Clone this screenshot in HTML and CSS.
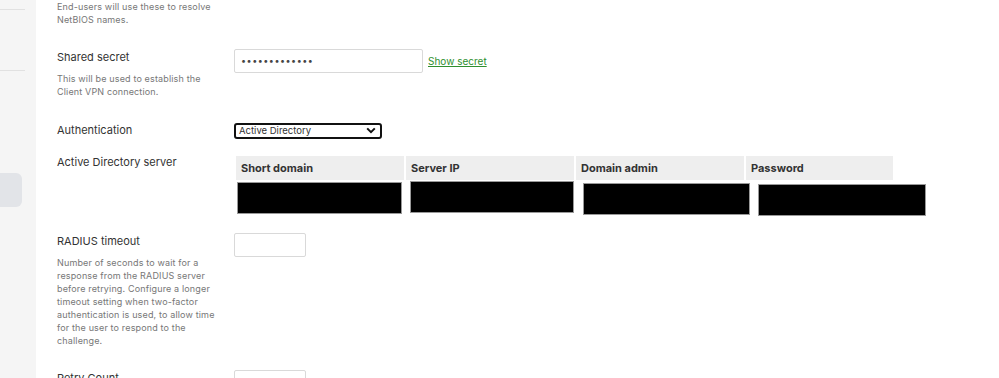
FILE: index.html
```html
<!DOCTYPE html>
<html>
<head>
<meta charset="utf-8">
<link rel="stylesheet" href="styles.css">
</head>
<body>
<div class="page">
  <aside class="sidebar">
    <div class="side-line side-line-top"></div>
    <div class="side-line side-line-mid"></div>
    <div class="side-pill"></div>
  </aside>
  <main class="main">
    <div class="row row-first">
      <div class="label-col">
        <p class="desc">End-users will use these to resolve NetBIOS names.</p>
      </div>
    </div>

    <div class="row">
      <div class="label-col">
        <div class="label">Shared secret</div>
        <p class="desc">This will be used to establish the Client VPN connection.</p>
      </div>
      <div class="control-col control-inline">
        <input class="text-input secret" type="password" value="abcdefghijklm">
        <a class="link" href="#">Show secret</a>
      </div>
    </div>

    <div class="row row-auth">
      <div class="label-col">
        <div class="label">Authentication</div>
      </div>
      <div class="control-col">
        <div class="select">
          <span>Active Directory</span>
          <svg class="chev" width="10" height="7" viewBox="0 0 10 7"><path d="M1.2 1.4 L5 5.2 L8.8 1.4" fill="none" stroke="#111" stroke-width="2"/></svg>
        </div>
      </div>
    </div>

    <div class="row row-ads">
      <div class="label-col">
        <div class="label">Active Directory server</div>
      </div>
      <div class="control-col">
        <div class="ads-head">
          <div class="th th-wide">Short domain</div>
          <div class="th th-wide">Server IP</div>
          <div class="th th-wide">Domain admin</div>
          <div class="th th-narrow">Password</div>
        </div>
        <div class="ads-body">
          <div class="redact r1"></div>
          <div class="redact r2"></div>
          <div class="redact r3"></div>
          <div class="redact r4"></div>
        </div>
      </div>
    </div>

    <div class="row row-radius">
      <div class="label-col">
        <div class="label">RADIUS timeout</div>
        <p class="desc">Number of seconds to wait for a response from the RADIUS server before retrying. Configure a longer timeout setting when two-factor authentication is used, to allow time for the user to respond to the challenge.</p>
      </div>
      <div class="control-col">
        <input class="text-input small" type="text">
      </div>
    </div>

    <div class="row">
      <div class="label-col">
        <div class="label">Retry Count</div>
      </div>
      <div class="control-col">
        <input class="text-input small" type="text">
      </div>
    </div>
  </main>
</div>
</body>
</html>
```
FILE: styles.css
```css
* { box-sizing: border-box; }
html, body { margin: 0; padding: 0; height: 100%; overflow: hidden; background: #fff; }
body { font-family: Inter, "Noto Sans", sans-serif; color: #333; }

.page { display: flex; height: 378px; overflow: hidden; }

.sidebar {
  width: 36px;
  flex: none;
  background: #f5f5f5;
  display: flex;
  flex-direction: column;
}
.side-line { height: 1px; width: 25px; background: #e1e1e1; }
.side-line-top { margin-top: 9px; }
.side-line-mid { margin-top: 60px; }
.side-pill {
  margin-top: 102px;
  width: 22px;
  height: 34px;
  background: #e2e4e8;
  border-radius: 0 6px 6px 0;
}

.main { flex: 1; padding-left: 21px; margin-top: -0.5px; }

.row { display: flex; margin-top: 23.5px; }
.row-first { margin-top: 0; }
.row-auth { margin-top: 23.5px; }
.row-ads { margin-top: 15px; }
.row-radius { margin-top: 17px; }

.label-col { width: 177px; flex: none; }
.label { font-size: 11px; line-height: 16px; color: #333; }
.desc {
  margin: 7px 0 0;
  font-size: 9px;
  line-height: 13px;
  letter-spacing: 0.15px;
  color: #777;
  width: 158px;
}
.row-first .desc { margin-top: 0; }

.control-col { flex: none; }
.control-inline { display: flex; align-items: center; height: 23px; gap: 5px; }

.text-input {
  height: 24px;
  border: 1px solid #d9d9d9;
  border-radius: 2px;
  padding: 0 6px;
  font-family: Inter, sans-serif;
  font-size: 9px;
  letter-spacing: 0.5px;
  color: #444;
  outline: none;
  display: block;
}
.secret { width: 189px; }
.small { width: 72px; }

.link { font-size: 10px; color: #2f8f2f; text-decoration: underline; }

.select {
  margin-top: 1px;
  width: 148px;
  height: 16px;
  border: 2px solid #111;
  border-radius: 3px;
  display: flex;
  align-items: center;
  justify-content: space-between;
  padding: 0 4px 0 3px;
  font-size: 9.5px;
  color: #333;
}
.chev { display: block; }

.ads-head { display: flex; gap: 2px; margin-top: 2px; margin-left: 2px; }
.th {
  background: #eeeeee;
  height: 24px;
  padding-left: 5px;
  font-size: 11px;
  font-weight: 700;
  color: #333;
  display: flex;
  align-items: center;
}
.th-wide { width: 168px; }
.th-narrow { width: 147px; }

.ads-body { display: flex; align-items: flex-start; margin-left: 3px; }
.redact { background: #000; border: 1px solid #999; height: 32px; }
.r1 { width: 165px; margin-top: 2px; }
.r2 { width: 164px; margin-left: 8px; margin-top: 1px; }
.r3 { width: 167px; margin-left: 9px; margin-top: 3px; }
.r4 { width: 168px; margin-left: 8px; margin-top: 4px; }
```
